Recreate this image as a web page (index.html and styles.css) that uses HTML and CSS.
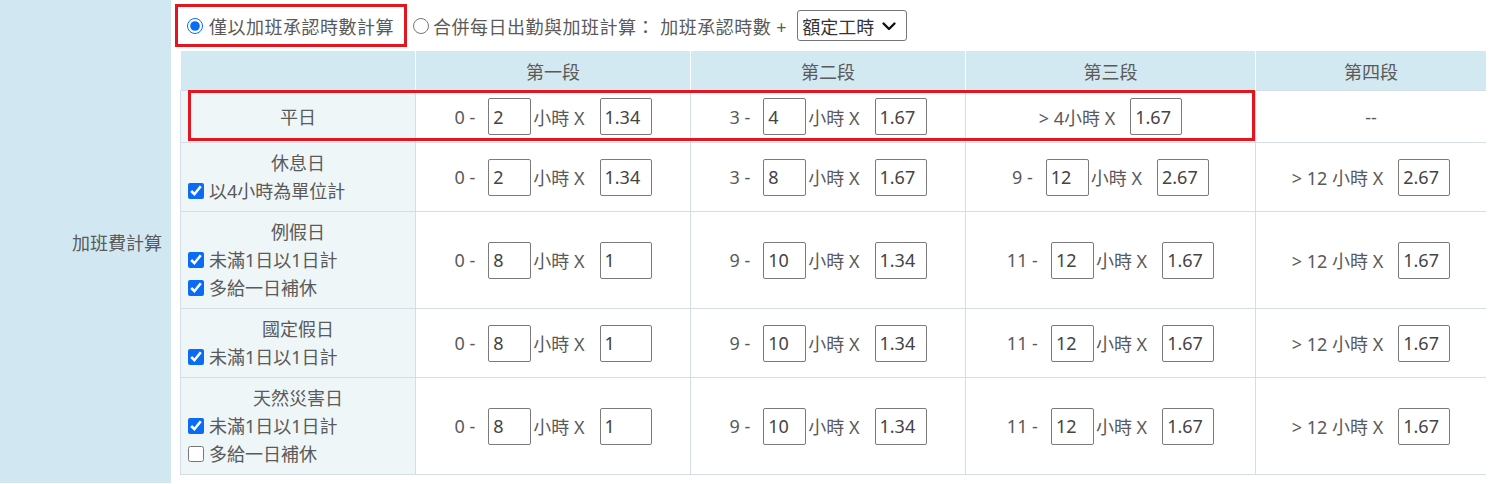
FILE: index.html
```html
<!DOCTYPE html>
<html lang="zh-Hant">
<head>
  <meta charset="UTF-8" />
  <title>加班費計算</title>
  <link rel="stylesheet" href="styles.css">
</head>
<body>

  <div class="form-row">
    <div class="form-label">加班費計算</div>

    <div class="form-body">
      <!-- 計算方式 -->
      <div class="mode-line">
        <label class="mode-pick"><input type="radio" name="mode" checked />僅以加班承認時數計算</label>
        <label class="mode-alt"><input type="radio" name="mode" />合併每日出勤與加班計算： 加班承認時數 +</label>
        <div class="select">
          <span>額定工時</span>
          <svg width="18" height="18" viewBox="0 0 18 18"><path d="M3.5 6.5 L9 12 L14.5 6.5" fill="none" stroke="#111" stroke-width="2.4" stroke-linecap="round" stroke-linejoin="round"/></svg>
        </div>
      </div>

      <!-- 各段費率 -->
      <div class="table-wrap">
        <table class="rate-table">
          <colgroup>
            <col style="width:235px"><col style="width:275px"><col style="width:275px"><col style="width:290px"><col>
          </colgroup>
          <thead>
            <tr><th></th><th>第一段</th><th>第二段</th><th>第三段</th><th>第四段</th></tr>
          </thead>
          <tbody>
            <tr>
              <td class="day"><div class="day-name">平日</div></td>
              <td><span class="seg">0 -<input class="hrs" value="2">小時 X<input class="rate" value="1.34"></span></td>
              <td><span class="seg">3 -<input class="hrs" value="4">小時 X<input class="rate" value="1.67"></span></td>
              <td><span class="seg">&gt; 4小時 X<input class="rate" value="1.67"></span></td>
              <td>--</td>
            </tr>
            <tr>
              <td class="day">
                <div class="day-name">休息日</div>
                <label class="day-opt"><input type="checkbox" checked />以4小時為單位計</label>
              </td>
              <td><span class="seg">0 -<input class="hrs" value="2">小時 X<input class="rate" value="1.34"></span></td>
              <td><span class="seg">3 -<input class="hrs" value="8">小時 X<input class="rate" value="1.67"></span></td>
              <td><span class="seg">9 -<input class="hrs" value="12">小時 X<input class="rate" value="2.67"></span></td>
              <td><span class="seg">&gt; 12 小時 X<input class="rate" value="2.67"></span></td>
            </tr>
            <tr>
              <td class="day">
                <div class="day-name">例假日</div>
                <label class="day-opt"><input type="checkbox" checked />未滿1日以1日計</label>
                <label class="day-opt"><input type="checkbox" checked />多給一日補休</label>
              </td>
              <td><span class="seg">0 -<input class="hrs" value="8">小時 X<input class="rate" value="1"></span></td>
              <td><span class="seg">9 -<input class="hrs" value="10">小時 X<input class="rate" value="1.34"></span></td>
              <td><span class="seg">11 -<input class="hrs" value="12">小時 X<input class="rate" value="1.67"></span></td>
              <td><span class="seg">&gt; 12 小時 X<input class="rate" value="1.67"></span></td>
            </tr>
            <tr>
              <td class="day">
                <div class="day-name">國定假日</div>
                <label class="day-opt"><input type="checkbox" checked />未滿1日以1日計</label>
              </td>
              <td><span class="seg">0 -<input class="hrs" value="8">小時 X<input class="rate" value="1"></span></td>
              <td><span class="seg">9 -<input class="hrs" value="10">小時 X<input class="rate" value="1.34"></span></td>
              <td><span class="seg">11 -<input class="hrs" value="12">小時 X<input class="rate" value="1.67"></span></td>
              <td><span class="seg">&gt; 12 小時 X<input class="rate" value="1.67"></span></td>
            </tr>
            <tr>
              <td class="day">
                <div class="day-name">天然災害日</div>
                <label class="day-opt"><input type="checkbox" checked />未滿1日以1日計</label>
                <label class="day-opt"><input type="checkbox" />多給一日補休</label>
              </td>
              <td><span class="seg">0 -<input class="hrs" value="8">小時 X<input class="rate" value="1"></span></td>
              <td><span class="seg">9 -<input class="hrs" value="10">小時 X<input class="rate" value="1.34"></span></td>
              <td><span class="seg">11 -<input class="hrs" value="12">小時 X<input class="rate" value="1.67"></span></td>
              <td><span class="seg">&gt; 12 小時 X<input class="rate" value="1.67"></span></td>
            </tr>
          </tbody>
        </table>

        <!-- 標示框 -->
        <div class="row-mark"></div>
      </div>
    </div>
  </div>

</body>
</html>
```

FILE: styles.css
```css
body {
  margin: 0;
  font-family: "Noto Sans", "Noto Sans CJK TC", sans-serif;
  font-size: 18px;
  color: #5a5a5a;
  background: #fff;
}

/* 版面 */
.form-row {
  display: flex;
}

.form-label {
  width: 162px;
  padding-right: 9px;
  background: #d1e8f2;
  display: flex;
  align-items: center;
  justify-content: flex-end;
}

.form-body {
  flex: 1;
  padding: 4px 14px 8px 4px;
}

/* 計算方式 */
.mode-line {
  display: flex;
  align-items: center;
  height: 43px;
  margin-bottom: 4px;
  letter-spacing: 0.5px;
}

.mode-pick,
.mode-alt {
  display: flex;
  align-items: center;
}

.mode-pick {
  height: 43px;
  box-sizing: border-box;
  border: 3px solid #e3161f;
  padding: 0 10px 0 9px;
}

.mode-alt {
  margin-left: 6px;
}

.mode-line input[type="radio"] {
  width: 16px;
  height: 16px;
  margin: 0 6px 0 0;
  accent-color: #0a6cf5;
}

.mode-alt input[type="radio"] {
  margin-right: 4px;
}

.select {
  display: flex;
  align-items: center;
  gap: 6px;
  height: 31px;
  margin-left: 10px;
  padding: 0 8px 0 4px;
  box-sizing: border-box;
  border: 1px solid #767676;
  border-radius: 3px;
  color: #333;
  letter-spacing: 0;
}

/* 費率表 */
.table-wrap {
  position: relative;
  margin-left: 5px;
}

.rate-table {
  width: 100%;
  border-collapse: collapse;
  table-layout: fixed;
}

.rate-table th {
  height: 39px;
  padding: 0;
  background: #d3e9f2;
  font-weight: normal;
  border-left: 1px solid #fff;
}

.rate-table th:first-child {
  border-left: none;
}

.rate-table td {
  padding: 7px 8px;
  text-align: center;
  vertical-align: middle;
  white-space: nowrap;
  border-top: 1px solid #d5dde6;
  border-bottom: 1px solid #d5dde6;
  border-left: 1px solid #d5dde6;
}

.rate-table td.day {
  padding: 6px 7px;
  text-align: left;
  background: #eef6f8;
}

.day-name {
  text-align: center;
  line-height: 28px;
}

.day-opt {
  display: flex;
  align-items: center;
  line-height: 28px;
}

.day-opt input {
  width: 16px;
  height: 16px;
  margin: 0 5px 0 0;
  accent-color: #0a6cf5;
}

.seg {
  display: inline-flex;
  align-items: center;
}

.seg input {
  height: 37px;
  box-sizing: border-box;
  padding: 0 4px;
  border: 1px solid #7b7b7b;
  border-radius: 2px;
  font: inherit;
  color: #444;
}

.seg .hrs {
  width: 43px;
  margin: 0 2px 0 13px;
}

.seg .rate {
  width: 52px;
  margin-left: 15px;
}

/* 紅色標示框 */
.row-mark {
  position: absolute;
  left: 8px;
  top: 39px;
  width: 1067px;
  height: 51px;
  box-sizing: border-box;
  border: 3px solid #e3161f;
  pointer-events: none;
}
```
